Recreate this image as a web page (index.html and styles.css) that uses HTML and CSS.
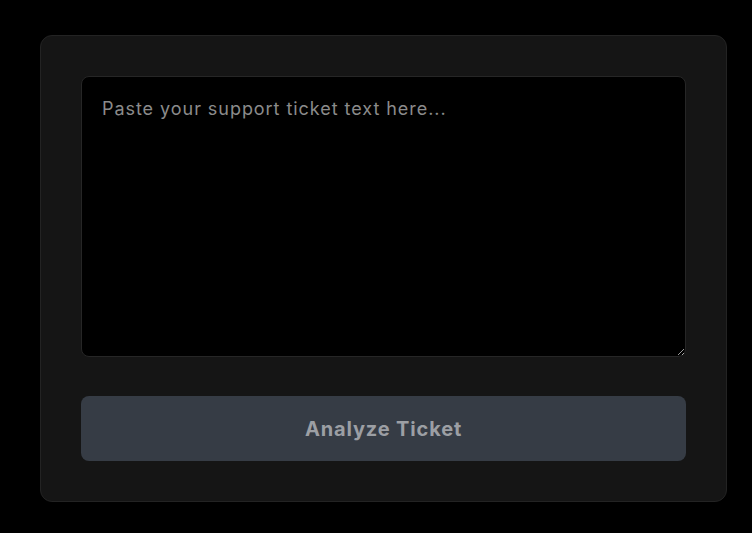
FILE: index.html
```html
<!DOCTYPE html>
<html>
<head>
<meta charset="utf-8">
<link rel="stylesheet" href="styles.css">
</head>
<body>
<main class="page">
  <section class="card">
    <textarea class="ticket-input" placeholder="Paste your support ticket text here..."></textarea>
    <button class="analyze-btn" disabled>Analyze Ticket</button>
  </section>
</main>
</body>
</html>
```
FILE: styles.css
```css
html, body {
  margin: 0;
  padding: 0;
  background: #000;
  font-family: Inter, "Noto Sans", sans-serif;
}
.page {
  padding: 35px 25px 0 40px;
}
.card {
  box-sizing: border-box;
  width: 687px;
  height: 467px;
  background: #151515;
  border: 1px solid #232323;
  border-radius: 12px;
  padding: 40px;
  display: flex;
  flex-direction: column;
  gap: 39px;
}
.ticket-input {
  box-sizing: border-box;
  width: 100%;
  height: 281px;
  background: #000;
  border: 1px solid #262626;
  border-radius: 8px;
  padding: 19px 20px;
  color: #e5e5e5;
  font-family: Inter, "Noto Sans", sans-serif;
  font-size: 18px;
  line-height: 26px;
  letter-spacing: 0.95px;
  outline: none;
  resize: vertical;
}
.ticket-input::placeholder {
  color: #8b8b8b;
}
.analyze-btn {
  box-sizing: border-box;
  width: 100%;
  height: 65px;
  background: #363c45;
  border: none;
  border-radius: 8px;
  color: #9c9fa4;
  font-family: Inter, "Noto Sans", sans-serif;
  font-size: 20px;
  font-weight: 700;
  letter-spacing: 0.85px;
}
```
